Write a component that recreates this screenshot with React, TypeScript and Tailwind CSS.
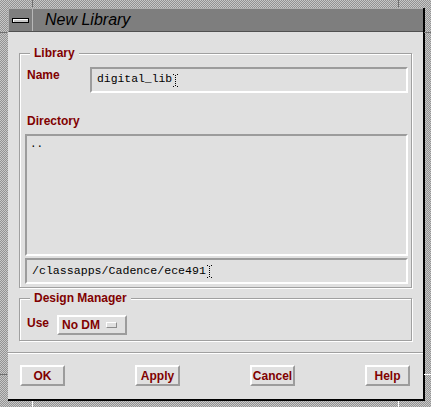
import React from 'react';

const sans = "font-['Liberation_Sans',Arial,sans-serif]";
const mono = "font-['Liberation_Mono','Courier_New',monospace]";

const sunken =
  'border-t-2 border-l-2 border-b-2 border-r-2 border-t-[#9c9c9c] border-l-[#9c9c9c] border-b-white border-r-white';
const raised =
  'border-t-2 border-l-2 border-b-2 border-r-2 border-t-white border-l-white border-b-[#9c9c9c] border-r-[#9c9c9c]';

function Group({ title, className = '', children }: { title: string; className?: string; children: React.ReactNode }) {
  return (
    <div className={`relative border border-[#a0a0a0] shadow-[inset_1px_1px_0_#fff,1px_1px_0_#fff] ${className}`}>
      <span className={`absolute left-[10px] -top-[9px] bg-[#e0e0e0] px-[4px] text-[12px] leading-[16px] font-bold text-[#800000] ${sans}`}>
        {title}
      </span>
      {children}
    </div>
  );
}

function IBeam() {
  return (
    <svg width="5" height="13" viewBox="0 0 5 13" className="ml-[1px]" shapeRendering="crispEdges">
      <g fill="#000">
        <rect x="0" y="0" width="1" height="1" />
        <rect x="4" y="0" width="1" height="1" />
        <rect x="2" y="1" width="1" height="1" />
        <rect x="2" y="3" width="1" height="1" />
        <rect x="2" y="5" width="1" height="1" />
        <rect x="2" y="7" width="1" height="1" />
        <rect x="2" y="9" width="1" height="1" />
        <rect x="2" y="11" width="1" height="1" />
        <rect x="0" y="12" width="1" height="1" />
        <rect x="4" y="12" width="1" height="1" />
      </g>
    </svg>
  );
}

function PushButton({ label }: { label: string }) {
  return (
    <button
      className={`w-[45px] h-[21px] flex items-center justify-center bg-[#e0e0e0] text-[12px] font-bold text-[#800000] ${sans} ${raised}`}
    >
      {label}
    </button>
  );
}

export default function App() {
  return (
    <div className="relative w-[431px] h-[407px] bg-[repeating-conic-gradient(#939393_0_25%,#c8c8c8_0_50%)] bg-[length:2px_2px] pl-[8px] pt-[8px]">
      {/* frame corner notches */}
      <div className="absolute left-[32px] top-0 w-[1px] h-[7px] bg-[#707070]" />
      <div className="absolute left-[398px] top-0 w-[1px] h-[7px] bg-[#707070]" />
      <div className="absolute left-[32px] bottom-0 w-[1px] h-[6px] bg-white" />
      <div className="absolute left-[398px] bottom-0 w-[1px] h-[6px] bg-white" />
      <div className="absolute right-0 top-[32px] w-[7px] h-[1px] bg-[#707070]" />
      <div className="absolute right-0 top-[374px] w-[7px] h-[1px] bg-white" />
      <div className="absolute left-0 top-[32px] w-[7px] h-[1px] bg-[#707070]" />
      <div className="absolute left-0 top-[374px] w-[7px] h-[1px] bg-[#707070]" />

      <div className="w-[417px] h-[393px] flex flex-col border-r-2 border-b-2 border-black">
        {/* title bar */}
        <div className="h-[24px] flex bg-[#7e7e7e] border-t border-l border-t-[#b0b0b0] border-l-[#b0b0b0] border-b border-b-[#505050]">
          <div className="w-[24px] flex items-center justify-center border-r border-r-[#b8b8b8]">
            <div className="w-[17px] h-[5px] bg-[#c8c8c8] border border-black shadow-[inset_1px_1px_0_#fff]" />
          </div>
          <div className={`pl-[12px] flex items-center text-[16px] italic text-black ${sans}`}>New Library</div>
        </div>

        {/* content */}
        <div className="flex-1 flex flex-col bg-[#e0e0e0]">
          <Group title="Library" className="mx-[11px] mt-[21px] pl-[5px] pr-[3px] pt-[13px] pb-[3px] flex flex-col">
            <div className="flex items-start">
              <span className={`w-[65px] pl-[2px] text-[12px] leading-[16px] font-bold text-[#800000] ${sans}`}>Name</span>
              <div className={`flex-1 h-[26px] flex items-center pl-[5px] ${sunken}`}>
                <span className={`text-[11.4px] text-black ${mono}`}>digital_lib</span>
                <IBeam />
              </div>
            </div>
            <span className={`mt-[20px] pl-[2px] text-[12px] leading-[16px] font-bold text-[#800000] ${sans}`}>Directory</span>
            <div className={`mt-[5px] h-[122px] pl-[3px] pt-[3px] ${sunken}`}>
              <span className={`block text-[11px] leading-[10px] text-black ${mono}`}>..</span>
            </div>
            <div className={`mt-[2px] h-[26px] flex items-center pl-[5px] ${sunken}`}>
              <span className={`text-[11.6px] text-black ${mono}`}>/classapps/Cadence/ece491</span>
              <IBeam />
            </div>
          </Group>

          <Group title="Design Manager" className="mx-[11px] mt-[10px] pl-[7px] pt-[16px] pb-[5px] flex items-start">
            <span className={`w-[30px] text-[12px] leading-[16px] font-bold text-[#800000] ${sans}`}>Use</span>
            <div className={`w-[70px] h-[20px] flex items-center pl-[3px] pr-[8px] justify-between bg-[#e0e0e0] ${raised}`}>
              <span className={`text-[12px] font-bold text-[#800000] ${sans}`}>No DM</span>
              <div className="w-[11px] h-[6px] border-t border-l border-white border-b border-r border-b-[#8c8c8c] border-r-[#8c8c8c]" />
            </div>
          </Group>

          <div className="mt-[11px] h-[1px] bg-[#a0a0a0]" />
          <div className="h-[1px] bg-white" />

          <div className="mt-[11px] flex justify-between pl-[12px] pr-[13px]">
            <PushButton label="OK" />
            <PushButton label="Apply" />
            <PushButton label="Cancel" />
            <PushButton label="Help" />
          </div>
        </div>
      </div>
    </div>
  );
}
